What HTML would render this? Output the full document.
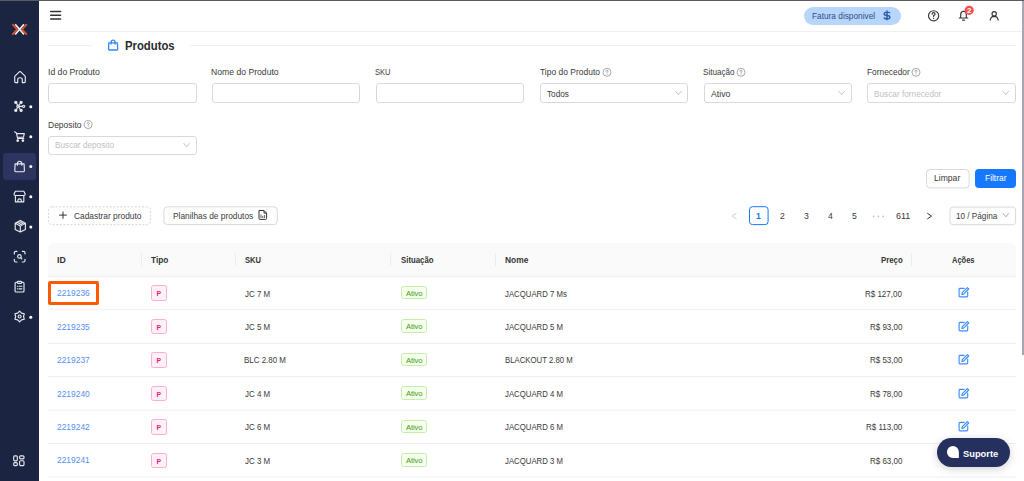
<!DOCTYPE html>
<html><head><meta charset="utf-8">
<style>
*{box-sizing:border-box;margin:0;padding:0}
html,body{width:1024px;height:481px;overflow:hidden;background:#fff;font-family:"Liberation Sans",sans-serif;color:#262626}
.a{position:absolute}
.t{position:absolute;white-space:nowrap;line-height:1;transform-origin:0 0}
#topline{left:0;top:0;width:1024px;height:1px;background:#5c5c5c}
#scroll{left:1022px;top:1px;width:2px;height:354px;background:#a6a6b4}
#side{left:0;top:1px;width:39px;height:480px;background:#1b2441}
#hdrline{left:39px;top:31px;width:983px;height:1px;background:#f0f0f0}
.inp{position:absolute;height:19.2px;width:148.5px;border:1px solid #d9d9d9;border-radius:3px;background:#fff}
.sep{position:absolute;top:252.7px;width:1px;height:13.3px;background:#ececec}
.rowline{position:absolute;left:48px;width:968px;height:1px;background:#f0f0f0}
.tagp{position:absolute;left:151.3px;width:15.7px;height:15.7px;border:1px solid #ffadd2;background:#fff0f6;border-radius:2.5px;color:#e0218a;font-size:8px;font-weight:700;text-align:center;line-height:15.4px}
.taga{position:absolute;left:401.1px;width:26.2px;height:13.5px;border:1px solid #c6eeab;background:#f6ffed;border-radius:2.5px;color:#3a9c10;font-size:7.6px;text-align:center;line-height:13.6px;letter-spacing:-0.15px}
</style></head><body>
<div id="side" class="a"></div>
<div id="topline" class="a"></div>
<div id="scroll" class="a"></div>
<div id="hdrline" class="a"></div>
<svg class="a" style="left:0;top:0" width="39" height="481" viewBox="0 0 39 481">
 <rect x="3" y="153" width="33" height="27" rx="3" fill="#2c345f"/>
 <!-- logo -->
 <g fill="none" stroke-width="1.75" stroke-linecap="butt">
  <path d="M12.3,24.2 L17.2,29.4 L12.3,34.6" stroke="#e0542b"/>
  <path d="M26.9,24.2 L22,29.4 L26.9,34.6" stroke="#e0542b"/>
  <path d="M15.2,24.2 L24,34.6 M24,24.2 L15.2,34.6" stroke="#f0f0f4" stroke-width="1.6"/>
 </g>
 <g fill="none" stroke="#e9eaf0" stroke-width="1.15" stroke-linecap="round" stroke-linejoin="round">
  <!-- home -->
  <path d="M14.7,76.4 L19.3,71.8 Q20,71.2 20.7,71.8 L25.3,76.4 L25.3,81.6 Q25.3,82.6 24.3,82.6 L22.3,82.6 L22.3,79.6 Q22.3,77.7 20,77.7 Q17.7,77.7 17.7,79.6 L17.7,82.6 L15.7,82.6 Q14.7,82.6 14.7,81.6 Z"/>
  <!-- network -->
  <circle cx="15.8" cy="102.3" r="1.1" fill="#e9eaf0"/><circle cx="21.1" cy="102.3" r="1.1" fill="#e9eaf0"/>
  <circle cx="15.8" cy="110.3" r="1.1" fill="#e9eaf0"/><circle cx="21.1" cy="110.3" r="1.1" fill="#e9eaf0"/>
  <circle cx="17.9" cy="106.3" r="1.1"/><circle cx="23.6" cy="106.3" r="1.1"/>
  <path d="M16.7,103.3 L17.5,105.2 M20.3,103.3 L18.7,105.4 M16.7,109.3 L17.5,107.4 M20.3,109.3 L18.7,107.2 M19,106.3 L22.5,106.3"/>
  <!-- cart -->
  <path d="M14.6,131.8 L16.4,132.9 L17.6,138.5 L23.8,138.5 M16.8,133.6 L24.3,133.6 L23.5,137.2 L17.3,137.2"/>
  <circle cx="17.7" cy="140.6" r="0.8" fill="#e9eaf0"/><circle cx="22.9" cy="140.6" r="0.8" fill="#e9eaf0"/>
  <!-- bag -->
  <path d="M15.1,163.9 L24.1,163.9 L24.4,170.8 Q24.4,171.7 23.5,171.7 L15.7,171.7 Q14.8,171.7 14.8,170.8 Z"/>
  <path d="M17.4,165.2 L17.4,163.4 Q17.6,161.2 19.6,161.2 Q21.6,161.2 21.8,163.4 L21.8,165.2"/>
  <!-- store -->
  <path d="M15.4,191.2 L23.8,191.2 L25.2,194 Q25.2,195.5 23.8,195.5 L15.4,195.5 Q14,195.5 14,194 Z"/>
  <path d="M15.4,195.5 L15.4,201.8 L23.8,201.8 L23.8,195.5 M17.9,201.8 L17.9,200.3 Q17.9,198.8 19.6,198.8 Q21.3,198.8 21.3,200.3 L21.3,201.8"/>
  <!-- box -->
  <path d="M20.3,220.4 L25.4,223.2 L25.4,229.4 L20.3,232.1 L15.2,229.4 L15.2,223.2 Z M15.4,223.3 L20.3,226.1 L25.2,223.3 M20.3,226.1 L20.3,232 M17.6,222.6 L21.9,225.1 M19.3,221.6 L23.5,224.1"/>
  <!-- scan -->
  <path d="M14.3,254 L14.3,252.8 Q14.3,251.3 15.8,251.3 L17,251.3 M22.3,251.3 L23.5,251.3 Q25,251.3 25,252.8 L25,254 M25,259.3 L25,260.5 Q25,262 23.5,262 L22.3,262 M17,262 L15.8,262 Q14.3,262 14.3,260.5 L14.3,259.3"/>
  <circle cx="19.4" cy="256.4" r="1.8"/><path d="M20.7,257.7 L21.8,258.8"/>
  <!-- clipboard -->
  <path d="M17.2,282.2 L16.1,282.2 Q15.1,282.2 15.1,283.2 L15.1,291 Q15.1,292 16.1,292 L23,292 Q24,292 24,291 L24,283.2 Q24,282.2 23,282.2 L21.8,282.2"/>
  <rect x="17.2" y="281.3" width="4.6" height="2" rx="1"/>
  <path d="M17.4,286.2 L17.6,286.2 M19,286.2 L21.8,286.2 M17.4,288.8 L17.6,288.8 M19,288.8 L21.8,288.8"/>
  <!-- gear -->
  <path d="M19.60,311.10 L21.55,313.12 L24.28,313.80 L23.50,316.50 L24.28,319.20 L21.55,319.88 L19.60,321.90 L17.65,319.88 L14.92,319.20 L15.70,316.50 L14.92,313.80 L17.65,313.12Z"/>
  <circle cx="19.6" cy="316.5" r="1.5"/>
  <!-- grid -->
  <rect x="13.7" y="455.8" width="3.6" height="5" rx="1"/>
  <rect x="19.6" y="455.8" width="4.4" height="3" rx="1"/>
  <rect x="13.7" y="462.6" width="3.6" height="3" rx="1"/>
  <rect x="19.6" y="460.7" width="4.4" height="4.9" rx="1"/>
 </g>
 <g fill="#ffffff">
  <circle cx="30.8" cy="106.8" r="1.5"/>
  <circle cx="30.8" cy="136.8" r="1.5"/>
  <circle cx="30.8" cy="166.6" r="1.5"/>
  <circle cx="30.8" cy="196.8" r="1.5"/>
  <circle cx="30.8" cy="227" r="1.5"/>
  <circle cx="30.8" cy="317.2" r="1.5"/>
 </g>
</svg>

<svg class="a" style="left:39px;top:0" width="985" height="60" viewBox="39 0 985 60">
 <g stroke="#333" stroke-width="1.5" stroke-linecap="round">
  <path d="M50.7,11.5 L60.6,11.5 M50.7,15.2 L60.6,15.2 M50.7,18.9 L60.6,18.9"/>
 </g>
 <rect x="804" y="7" width="97" height="18" rx="9" fill="#b8d5fb"/>
 <!-- help -->
 <g fill="none" stroke="#3a3a3a" stroke-width="1.15" stroke-linecap="round">
  <circle cx="933.6" cy="15.8" r="5.1"/>
  <path d="M932.1,14.3 Q932.1,12.6 933.6,12.6 Q935.1,12.6 935.1,14 Q935.1,15 933.6,15.6 L933.6,16.6"/>
 </g>
 <circle cx="933.6" cy="18.5" r="0.65" fill="#3a3a3a"/>
 <!-- bell -->
 <g fill="none" stroke="#333" stroke-width="1.15" stroke-linejoin="round" stroke-linecap="round">
  <path d="M959.2,18 L967.8,18 M960.7,18 L960.7,14.3 Q960.8,11.3 963.5,11.2 Q966.2,11.3 966.3,14.3 L966.3,18"/>
  <path d="M962.6,20.1 L964.4,20.1" stroke-width="1.4"/>
 </g>
 <circle cx="969.2" cy="10.3" r="4.6" fill="#ff4d4f"/>
 <text x="969.2" y="13.1" font-family="Liberation Sans" font-size="8" font-weight="700" fill="#fff" text-anchor="middle">2</text>
 <!-- user -->
 <g fill="none" stroke="#333" stroke-width="1.1" stroke-linecap="round">
  <circle cx="994.2" cy="13.8" r="2.2"/>
  <path d="M990.2,20.1 Q990.8,16.5 994.2,16.4 Q997.6,16.5 998.2,20.1"/>
 </g>
 <!-- title divider -->
 <path d="M48,45.5 L92,45.5 M190,45.5 L1016,45.5" stroke="#f0f0f0" stroke-width="1"/>
 <g fill="none" stroke="#3385ff" stroke-width="1.3" stroke-linejoin="round">
  <path d="M108.8,42.9 L117.4,42.9 L117.7,49.2 Q117.7,50 116.9,50 L109.3,50 Q108.5,50 108.5,49.2 Z"/>
  <path d="M111.1,44.4 L111.1,42.3 Q111.2,40.2 113.1,40.2 Q115,40.2 115.1,42.3 L115.1,44.4"/>
 </g>
</svg>

<div class="inp" style="left:48.00px;top:83.4px"></div>
<div class="inp" style="left:211.88px;top:83.4px"></div>
<div class="inp" style="left:375.76px;top:83.4px"></div>
<div class="inp" style="left:539.64px;top:83.4px"></div>
<div class="inp" style="left:703.52px;top:83.4px"></div>
<div class="inp" style="left:867.40px;top:83.4px"></div>
<div class="inp" style="left:48px;top:136px;height:18.6px"></div>
<svg class="a" style="left:0;top:0" width="1024" height="240" viewBox="0 0 1024 240">
 <g fill="none" stroke="#b5b5b5" stroke-width="0.8" stroke-linecap="round" stroke-linejoin="round">
  <path d="M675.6,91.2 L678.5,94.6 L681.4,91.2"/>
  <path d="M838.8,91.2 L841.7,94.6 L844.6,91.2"/>
  <path d="M1002.8,91.2 L1005.7,94.6 L1008.6,91.2"/>
  <path d="M183.8,143.4 L186.7,146.8 L189.6,143.4"/>
  <path d="M1003.2,213.6 L1005.8,216.8 L1008.4,213.6"/>
 </g>
 <g fill="none" stroke="#8c8c8c" stroke-width="0.75">
  <circle cx="607" cy="72.3" r="4"/>
  <circle cx="741" cy="72.3" r="4"/>
  <circle cx="916" cy="72.3" r="4"/>
  <circle cx="88.2" cy="124.6" r="4"/>
 </g>
 <g fill="none" stroke="#8c8c8c" stroke-width="0.7" stroke-linecap="round">
  <path d="M605.9,71.4 Q605.9,70.2 607,70.2 Q608.1,70.2 608.1,71.2 Q608.1,71.9 607,72.4 L607,73.1"/>
  <path d="M739.9,71.4 Q739.9,70.2 741,70.2 Q742.1,70.2 742.1,71.2 Q742.1,71.9 741,72.4 L741,73.1"/>
  <path d="M914.9,71.4 Q914.9,70.2 916,70.2 Q917.1,70.2 917.1,71.2 Q917.1,71.9 916,72.4 L916,73.1"/>
  <path d="M87.1,123.7 Q87.1,122.5 88.2,122.5 Q89.3,122.5 89.3,123.5 Q89.3,124.2 88.2,124.7 L88.2,125.4"/>
 </g>
 <g fill="#8c8c8c"><circle cx="607" cy="74.4" r="0.45"/><circle cx="741" cy="74.4" r="0.45"/><circle cx="916" cy="74.4" r="0.45"/><circle cx="88.2" cy="126.7" r="0.45"/></g>
 <!-- buttons -->
 <rect x="926.5" y="169.5" width="42.6" height="18.4" rx="3.5" fill="#fff" stroke="#d9d9d9" stroke-width="1"/>
 <rect x="975" y="169" width="41" height="19" rx="4" fill="#1677ff"/>
 <rect x="48.5" y="206.9" width="101.9" height="17.8" rx="3.5" fill="#fff" stroke="#d0d0d0" stroke-width="0.9" stroke-dasharray="2,1.6"/>
 <rect x="163.9" y="206.8" width="113.4" height="17.8" rx="3.5" fill="#fff" stroke="#d9d9d9" stroke-width="1"/>
 <path d="M63,211.5 L63,218.8 M59.2,215.1 L66.8,215.1" stroke="#333" stroke-width="1"/>
 <!-- spreadsheet icon -->
 <g fill="none" stroke="#333" stroke-width="1">
  <path d="M259,210.5 L264,210.5 L266.6,213.1 L266.6,218.4 Q266.6,219.4 265.6,219.4 L260,219.4 Q259,219.4 259,218.4 Z"/>
  <path d="M264,210.5 L264,213.1 L266.6,213.1" />
  <path d="M261,214.6 L261,218 M262.8,215.8 L262.8,218 M264.6,215 L264.6,218" stroke-width="0.8"/>
 </g>
</svg>

<svg class="a" style="left:700px;top:200px" width="324" height="32" viewBox="700 200 324 32">
 <path d="M736.2,213.4 L732.2,216.1 L736.2,218.8" fill="none" stroke="#c4c4c4" stroke-width="0.9" stroke-linecap="round" stroke-linejoin="round"/>
 <rect x="749.5" y="206.7" width="18.6" height="17.9" rx="3" fill="#fff" stroke="#1677ff" stroke-width="1"/>
 <g fill="#c0c0c0"><circle cx="873.6" cy="216.4" r="0.9"/><circle cx="878.4" cy="216.4" r="0.9"/><circle cx="883.2" cy="216.4" r="0.9"/></g>
 <path d="M927.6,213.4 L931.6,216.1 L927.6,218.8" fill="none" stroke="#333" stroke-width="1" stroke-linecap="round" stroke-linejoin="round"/>
 <rect x="950" y="207.1" width="65.6" height="17.6" rx="3" fill="none" stroke="#d9d9d9" stroke-width="1"/>
 <path d="M1003.2,213.6 L1005.8,216.8 L1008.4,213.6" fill="none" stroke="#b5b5b5" stroke-width="0.8" stroke-linecap="round" stroke-linejoin="round"/>
</svg>

<div class="a" style="left:48px;top:243px;width:968px;height:33.5px;background:#fafafa;border-radius:6px 6px 0 0"></div>
<svg class="a" style="left:0;top:0" width="1024" height="481" viewBox="0 0 1024 481"><g fill="#efefef"><rect x="48" y="276.20" width="968" height="1"/><rect x="48" y="309.20" width="968" height="1"/><rect x="48" y="342.80" width="968" height="1"/><rect x="48" y="376.20" width="968" height="1"/><rect x="48" y="409.60" width="968" height="1"/><rect x="48" y="443.00" width="968" height="1"/><rect x="48" y="476.50" width="968" height="1"/></g></svg>
<div class="sep" style="left:141.2px"></div>
<div class="sep" style="left:234.7px"></div>
<div class="sep" style="left:390.2px"></div>
<div class="sep" style="left:494.7px"></div>
<div class="sep" style="left:910.8px"></div>
<div class="tagp" style="top:285.00px"><span style="display:inline-block;transform:scaleX(.85)">P</span></div>
<div class="taga" style="top:285.60px">Ativo</div>
<svg class="a" style="left:957px;top:286.10px" width="14" height="13" viewBox="0 0 14 13"><g fill="none" stroke="#3f8cff" stroke-width="1.15" stroke-linejoin="round" stroke-linecap="round"><path d="M7.2,2.3 L3,2.3 Q2.1,2.3 2.1,3.2 L2.1,10 Q2.1,10.9 3,10.9 L9.8,10.9 Q10.7,10.9 10.7,10 L10.7,6"/><path d="M10.3,1.6 L11.7,3 L6.6,8.1 L4.9,8.5 L5.3,6.7 Z"/></g></svg>
<div class="tagp" style="top:318.50px"><span style="display:inline-block;transform:scaleX(.85)">P</span></div>
<div class="taga" style="top:319.10px">Ativo</div>
<svg class="a" style="left:957px;top:319.60px" width="14" height="13" viewBox="0 0 14 13"><g fill="none" stroke="#3f8cff" stroke-width="1.15" stroke-linejoin="round" stroke-linecap="round"><path d="M7.2,2.3 L3,2.3 Q2.1,2.3 2.1,3.2 L2.1,10 Q2.1,10.9 3,10.9 L9.8,10.9 Q10.7,10.9 10.7,10 L10.7,6"/><path d="M10.3,1.6 L11.7,3 L6.6,8.1 L4.9,8.5 L5.3,6.7 Z"/></g></svg>
<div class="tagp" style="top:352.00px"><span style="display:inline-block;transform:scaleX(.85)">P</span></div>
<div class="taga" style="top:352.60px">Ativo</div>
<svg class="a" style="left:957px;top:353.10px" width="14" height="13" viewBox="0 0 14 13"><g fill="none" stroke="#3f8cff" stroke-width="1.15" stroke-linejoin="round" stroke-linecap="round"><path d="M7.2,2.3 L3,2.3 Q2.1,2.3 2.1,3.2 L2.1,10 Q2.1,10.9 3,10.9 L9.8,10.9 Q10.7,10.9 10.7,10 L10.7,6"/><path d="M10.3,1.6 L11.7,3 L6.6,8.1 L4.9,8.5 L5.3,6.7 Z"/></g></svg>
<div class="tagp" style="top:385.50px"><span style="display:inline-block;transform:scaleX(.85)">P</span></div>
<div class="taga" style="top:386.10px">Ativo</div>
<svg class="a" style="left:957px;top:386.60px" width="14" height="13" viewBox="0 0 14 13"><g fill="none" stroke="#3f8cff" stroke-width="1.15" stroke-linejoin="round" stroke-linecap="round"><path d="M7.2,2.3 L3,2.3 Q2.1,2.3 2.1,3.2 L2.1,10 Q2.1,10.9 3,10.9 L9.8,10.9 Q10.7,10.9 10.7,10 L10.7,6"/><path d="M10.3,1.6 L11.7,3 L6.6,8.1 L4.9,8.5 L5.3,6.7 Z"/></g></svg>
<div class="tagp" style="top:419.00px"><span style="display:inline-block;transform:scaleX(.85)">P</span></div>
<div class="taga" style="top:419.60px">Ativo</div>
<svg class="a" style="left:957px;top:420.10px" width="14" height="13" viewBox="0 0 14 13"><g fill="none" stroke="#3f8cff" stroke-width="1.15" stroke-linejoin="round" stroke-linecap="round"><path d="M7.2,2.3 L3,2.3 Q2.1,2.3 2.1,3.2 L2.1,10 Q2.1,10.9 3,10.9 L9.8,10.9 Q10.7,10.9 10.7,10 L10.7,6"/><path d="M10.3,1.6 L11.7,3 L6.6,8.1 L4.9,8.5 L5.3,6.7 Z"/></g></svg>
<div class="tagp" style="top:452.50px"><span style="display:inline-block;transform:scaleX(.85)">P</span></div>
<div class="taga" style="top:453.10px">Ativo</div>
<svg class="a" style="left:957px;top:453.60px" width="14" height="13" viewBox="0 0 14 13"><g fill="none" stroke="#3f8cff" stroke-width="1.15" stroke-linejoin="round" stroke-linecap="round"><path d="M7.2,2.3 L3,2.3 Q2.1,2.3 2.1,3.2 L2.1,10 Q2.1,10.9 3,10.9 L9.8,10.9 Q10.7,10.9 10.7,10 L10.7,6"/><path d="M10.3,1.6 L11.7,3 L6.6,8.1 L4.9,8.5 L5.3,6.7 Z"/></g></svg>
<div class="a" style="left:48px;top:280.7px;width:51.2px;height:24.5px;border:3.4px solid #ff5a00;border-radius:2px"></div>
<div class="a" style="left:937px;top:438px;width:73px;height:28.7px;border-radius:14.4px;background:#25305f;box-shadow:0 2px 8px rgba(0,0,0,0.18)"></div>
<svg class="a" style="left:946px;top:445px" width="14" height="14" viewBox="0 0 14 14"><path d="M6.9,1 A5.95,5.95 0 1 0 6.9,12.9 L12.85,12.9 L12.85,6.95 A5.95,5.95 0 0 0 6.9,1 Z" fill="#fff"/></svg>
<div class="t" style="left:812.28px;top:11.52px;font-size:8.6px;color:#2e4f8c;transform:scaleX(0.9650)">Fatura disponivel</div>
<div class="t" style="left:124.92px;top:40.00px;font-size:12.4px;color:#2a2a2a;font-weight:700;transform:scaleX(0.9127)">Produtos</div>
<div class="t" style="left:47.50px;top:67.73px;font-size:9.3px;color:#3a3a3a;transform:scaleX(0.9279)">Id do Produto</div>
<div class="t" style="left:211.40px;top:67.73px;font-size:9.3px;color:#3a3a3a;transform:scaleX(0.9282)">Nome do Produto</div>
<div class="t" style="left:375.39px;top:67.73px;font-size:9.3px;color:#3a3a3a;transform:scaleX(0.8111)">SKU</div>
<div class="t" style="left:539.97px;top:67.73px;font-size:9.3px;color:#3a3a3a;transform:scaleX(0.9119)">Tipo do Produto</div>
<div class="t" style="left:702.81px;top:67.73px;font-size:9.3px;color:#3a3a3a;transform:scaleX(0.8723)">Situação</div>
<div class="t" style="left:866.58px;top:67.73px;font-size:9.3px;color:#3a3a3a;transform:scaleX(0.8984)">Fornecedor</div>
<div class="t" style="left:47.62px;top:120.63px;font-size:9.3px;color:#3a3a3a;transform:scaleX(0.9127)">Deposito</div>
<div class="t" style="left:546.99px;top:88.57px;font-size:9.6px;color:#3a3a3a;transform:scaleX(0.8520)">Todos</div>
<div class="t" style="left:710.70px;top:88.57px;font-size:9.6px;color:#3a3a3a;transform:scaleX(0.9048)">Ativo</div>
<div class="t" style="left:873.96px;top:88.57px;font-size:9.6px;color:#bfbfbf;transform:scaleX(0.8594)">Buscar fornecedor</div>
<div class="t" style="left:55.16px;top:140.47px;font-size:9.6px;color:#bfbfbf;transform:scaleX(0.8576)">Buscar deposito</div>
<div class="t" style="left:934.41px;top:174.33px;font-size:9.3px;color:#3a3a3a;transform:scaleX(0.9236)">Limpar</div>
<div class="t" style="left:984.72px;top:174.33px;font-size:9.3px;color:#ffffff;transform:scaleX(0.9043)">Filtrar</div>
<div class="t" style="left:73.85px;top:211.53px;font-size:9.3px;color:#3a3a3a;transform:scaleX(0.9000)">Cadastrar produto</div>
<div class="t" style="left:172.83px;top:211.53px;font-size:9.3px;color:#3a3a3a;transform:scaleX(0.8975)">Planilhas de produtos</div>
<div class="t" style="left:896.33px;top:210.87px;font-size:9.6px;color:#3a3a3a;transform:scaleX(0.9333)">611</div>
<div class="t" style="left:955.86px;top:211.17px;font-size:9.6px;color:#3a3a3a;transform:scaleX(0.8503)">10 / Página</div>
<div class="t" style="left:57.32px;top:255.88px;font-size:9.0px;color:#333333;font-weight:700;transform:scaleX(0.9697)">ID</div>
<div class="t" style="left:151.00px;top:255.88px;font-size:9.0px;color:#333333;font-weight:700;transform:scaleX(0.9243)">Tipo</div>
<div class="t" style="left:244.79px;top:255.88px;font-size:9.0px;color:#333333;font-weight:700;transform:scaleX(0.8329)">SKU</div>
<div class="t" style="left:400.78px;top:255.88px;font-size:9.0px;color:#333333;font-weight:700;transform:scaleX(0.8676)">Situação</div>
<div class="t" style="left:504.93px;top:255.88px;font-size:9.0px;color:#333333;font-weight:700;transform:scaleX(0.9320)">Nome</div>
<div class="t" style="left:880.57px;top:255.88px;font-size:9.0px;color:#333333;font-weight:700;transform:scaleX(0.8660)">Preço</div>
<div class="t" style="left:952.49px;top:255.88px;font-size:9.0px;color:#333333;font-weight:700;transform:scaleX(0.8340)">Ações</div>
<div class="t" style="left:963.25px;top:448.64px;font-size:9.4px;color:#ffffff;font-weight:700;transform:scaleX(0.9943)">Suporte</div>
<div class="t" style="left:57.07px;top:288.42px;font-size:9.9px;color:#5590f2;transform:scaleX(0.8533)">2219236</div>
<div class="t" style="left:244.79px;top:288.67px;font-size:9.6px;color:#3a3a3a;transform:scaleX(0.8271)">JC 7 M</div>
<div class="t" style="left:505.20px;top:288.67px;font-size:9.6px;color:#3a3a3a;transform:scaleX(0.8119)">JACQUARD 7 Ms</div>
<div class="t" style="left:865.38px;top:288.67px;font-size:9.6px;color:#3a3a3a;transform:scaleX(0.8324)">R$ 127,00</div>
<div class="t" style="left:57.07px;top:321.82px;font-size:9.9px;color:#5590f2;transform:scaleX(0.8533)">2219235</div>
<div class="t" style="left:244.79px;top:322.07px;font-size:9.6px;color:#3a3a3a;transform:scaleX(0.8271)">JC 5 M</div>
<div class="t" style="left:505.20px;top:322.07px;font-size:9.6px;color:#3a3a3a;transform:scaleX(0.8119)">JACQUARD 5 M</div>
<div class="t" style="left:869.75px;top:322.07px;font-size:9.6px;color:#3a3a3a;transform:scaleX(0.8324)">R$ 93,00</div>
<div class="t" style="left:57.07px;top:355.22px;font-size:9.9px;color:#5590f2;transform:scaleX(0.8533)">2219237</div>
<div class="t" style="left:244.38px;top:355.47px;font-size:9.6px;color:#3a3a3a;transform:scaleX(0.8271)">BLC 2.80 M</div>
<div class="t" style="left:504.79px;top:355.47px;font-size:9.6px;color:#3a3a3a;transform:scaleX(0.8119)">BLACKOUT 2.80 M</div>
<div class="t" style="left:869.75px;top:355.47px;font-size:9.6px;color:#3a3a3a;transform:scaleX(0.8324)">R$ 53,00</div>
<div class="t" style="left:57.07px;top:388.62px;font-size:9.9px;color:#5590f2;transform:scaleX(0.8533)">2219240</div>
<div class="t" style="left:244.79px;top:388.87px;font-size:9.6px;color:#3a3a3a;transform:scaleX(0.8271)">JC 4 M</div>
<div class="t" style="left:505.20px;top:388.87px;font-size:9.6px;color:#3a3a3a;transform:scaleX(0.8119)">JACQUARD 4 M</div>
<div class="t" style="left:869.75px;top:388.87px;font-size:9.6px;color:#3a3a3a;transform:scaleX(0.8324)">R$ 78,00</div>
<div class="t" style="left:57.07px;top:422.02px;font-size:9.9px;color:#5590f2;transform:scaleX(0.8533)">2219242</div>
<div class="t" style="left:244.79px;top:422.27px;font-size:9.6px;color:#3a3a3a;transform:scaleX(0.8271)">JC 6 M</div>
<div class="t" style="left:505.20px;top:422.27px;font-size:9.6px;color:#3a3a3a;transform:scaleX(0.8119)">JACQUARD 6 M</div>
<div class="t" style="left:866.00px;top:422.27px;font-size:9.6px;color:#3a3a3a;transform:scaleX(0.8324)">R$ 113,00</div>
<div class="t" style="left:57.07px;top:455.42px;font-size:9.9px;color:#5590f2;transform:scaleX(0.8533)">2219241</div>
<div class="t" style="left:244.79px;top:455.67px;font-size:9.6px;color:#3a3a3a;transform:scaleX(0.8271)">JC 3 M</div>
<div class="t" style="left:505.20px;top:455.67px;font-size:9.6px;color:#3a3a3a;transform:scaleX(0.8119)">JACQUARD 3 M</div>
<div class="t" style="left:869.75px;top:455.67px;font-size:9.6px;color:#3a3a3a;transform:scaleX(0.8324)">R$ 63,00</div>
<div class="t" style="left:756.01px;top:210.87px;font-size:9.6px;color:#1677ff;font-weight:700;transform:scaleX(0.9000)">1</div>
<div class="t" style="left:779.73px;top:210.87px;font-size:9.6px;color:#3a3a3a;transform:scaleX(0.9000)">2</div>
<div class="t" style="left:803.77px;top:210.87px;font-size:9.6px;color:#3a3a3a;transform:scaleX(0.9000)">3</div>
<div class="t" style="left:827.84px;top:210.87px;font-size:9.6px;color:#3a3a3a;transform:scaleX(0.9000)">4</div>
<div class="t" style="left:851.62px;top:210.87px;font-size:9.6px;color:#3a3a3a;transform:scaleX(0.9000)">5</div>
<svg class="a" style="left:880px;top:8px" width="14" height="15" viewBox="880 8 14 15"><path d="M889.9,13.3 Q889.6,12.1 887,12.1 Q884.2,12.1 884.2,13.9 Q884.2,15.3 887,15.5 Q889.9,15.7 889.9,17.3 Q889.9,18.9 887,18.9 Q884.3,18.9 884,17.5 M887,10.6 L887,20.3" fill="none" stroke="#2c5cb0" stroke-width="1.45"/></svg>
</body></html>
